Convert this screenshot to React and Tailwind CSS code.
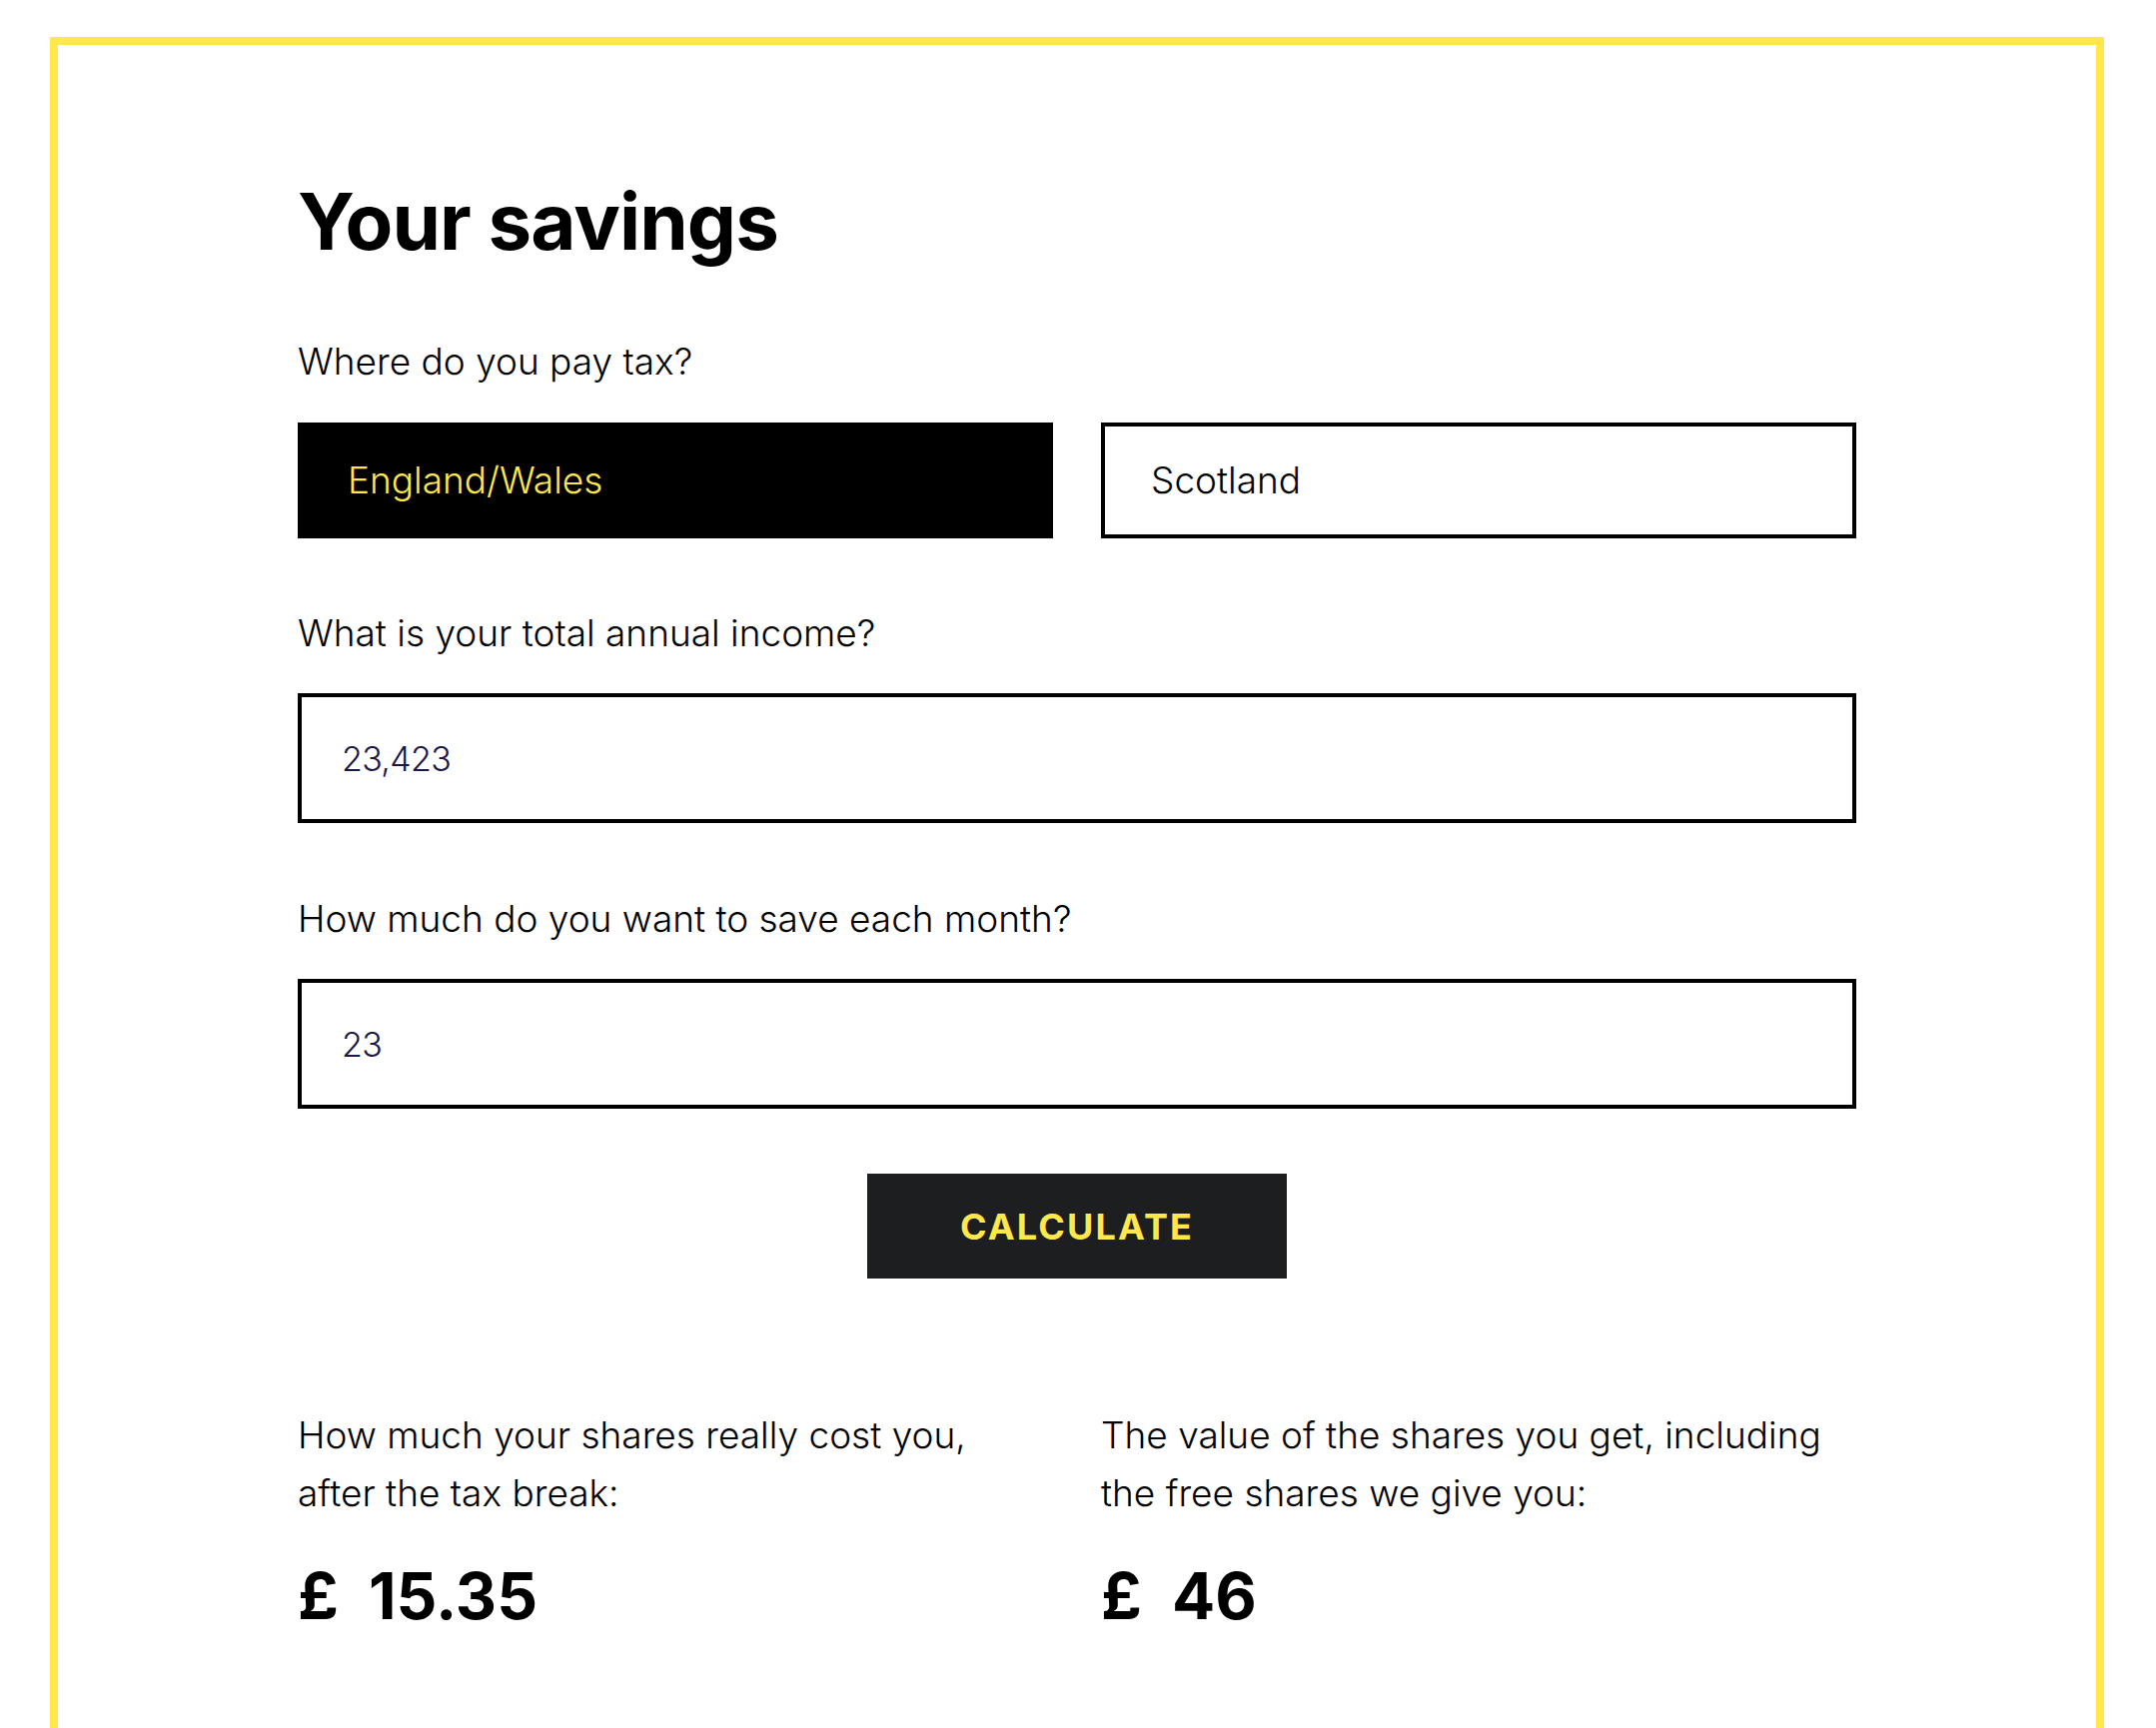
import {useState} from 'react';

const Field = ({label, value, onChange, className = ''}) => (
    <div className={className}>
        <p className="text-[37px] leading-[54px] font-light text-black">{label}</p>
        <input
            type="text"
            value={value}
            onChange={e => onChange(e.target.value)}
            className="mt-[33px] block w-full h-[130px] border-4 border-black px-[40px] text-[34px] tracking-[-0.02em] font-light text-[#1b1848] outline-none"
        />
    </div>
);

const Amount = ({value}) => (
    <p className="mt-[44px] flex gap-[30px] text-[64px] leading-[60px] font-bold text-black">
        <span>£</span>
        <span>{value}</span>
    </p>
);

export default function App() {
    const [region, setRegion] = useState('england');
    const [income, setIncome] = useState('23,423');
    const [monthly, setMonthly] = useState('23');

    const regionClass = (key) => region === key
        ? 'bg-black text-[#ffe74c] border-black'
        : 'bg-white text-black border-black';

    return (
        <div className="min-h-screen bg-white pt-[37px] font-['Inter',sans-serif]">
            <div className="ml-[50px] w-[2056px] border-8 border-b-0 border-[#ffe74c] px-[240px] pt-[138px] pb-[200px]">

                {/* Heading */}
                <h1 className="text-[78px] leading-[78px] font-bold tracking-[-0.012em] text-black">Your savings</h1>

                {/* Tax region */}
                <p className="mt-[74px] text-[37px] leading-[54px] font-light text-black">Where do you pay tax?</p>
                <div className="mt-[34px] grid grid-cols-2 gap-[48px]">
                    <button
                        onClick={() => setRegion('england')}
                        className={`h-[116px] border-4 px-[46px] text-left text-[37px] font-light ${regionClass('england')}`}
                    >
                        England/Wales
                    </button>
                    <button
                        onClick={() => setRegion('scotland')}
                        className={`h-[116px] border-4 px-[46px] text-left text-[37px] font-light ${regionClass('scotland')}`}
                    >
                        Scotland
                    </button>
                </div>

                <Field className="mt-[68px]" label="What is your total annual income?" value={income} onChange={setIncome}/>
                <Field className="mt-[69px]" label="How much do you want to save each month?" value={monthly} onChange={setMonthly}/>

                <div className="mt-[65px] flex justify-center">
                    <button className="w-[420px] h-[105px] bg-[#1d1e20] text-[#ffe74c] text-[36px] font-bold tracking-[0.06em]">
                        CALCULATE
                    </button>
                </div>

                {/* Results */}
                <div className="mt-[128px] grid grid-cols-2 gap-[48px]">
                    <div>
                        <p className="text-[37px] leading-[58px] font-light text-black">
                            How much your shares really cost you,<br/>after the tax break:
                        </p>
                        <Amount value="15.35"/>
                    </div>
                    <div>
                        <p className="text-[37px] leading-[58px] font-light text-black">
                            The value of the shares you get, including<br/>the free shares we give you:
                        </p>
                        <Amount value="46"/>
                    </div>
                </div>
            </div>
        </div>
    );
}
